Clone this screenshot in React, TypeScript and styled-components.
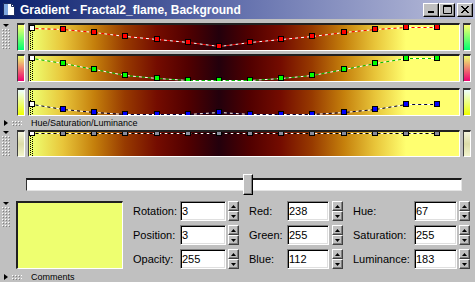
import React from 'react';
import styled, { createGlobalStyle } from 'styled-components';

const GlobalStyle = createGlobalStyle`
  html, body { margin: 0; padding: 0; background: #c0c0c0; }
  #root { width: 475px; height: 282px; }
`;

const CONTENT_W = 430;
const N = 14;
const STEP = 31.15;
const xs = Array.from({ length: N }, (_, i) => 3 + Math.round(STEP * i));
const R = [238, 232, 197, 151, 116, 81, 35, 81, 116, 151, 197, 232, 255, 255];
const G = [255, 197, 128, 58, 12, 0, 0, 0, 12, 58, 128, 197, 255, 255];
const B = [112, 58, 12, 0, 0, 0, 12, 0, 0, 0, 12, 58, 112, 112];
const A = Array.from({ length: N }, () => 255);

const gradientCss = `linear-gradient(90deg, ${xs
  .map((x, i) => `rgb(${R[i]},${G[i]},${B[i]}) ${((x / CONTENT_W) * 100).toFixed(2)}%`)
  .join(', ')})`;

const dots = `
  background:
    conic-gradient(from 270deg at 1px 1px, #ffffff 25%, transparent 0) 0 0 / 3px 3px,
    conic-gradient(from 270deg at 1px 1px, #808080 25%, transparent 0) 1px 1px / 3px 3px;
`;

const Window = styled.div`
  width: 475px;
  height: 282px;
  overflow: hidden;
  background: #c0c0c0;
  font-family: "Liberation Sans", Arial, sans-serif;
  font-size: 11px;
  color: #000;
  display: flex;
  flex-direction: column;
`;

const TitleBar = styled.div`
  height: 19px;
  flex: none;
  display: flex;
  align-items: center;
  box-sizing: border-box;
  padding: 0 2px 0 3px;
  background: linear-gradient(90deg, #0a1f6a 0%, #5a68a8 45%, #bcc0dc 100%);
`;

const TitleText = styled.span`
  margin-left: 5px;
  color: #fff;
  font-weight: bold;
  font-size: 12px;
  white-space: nowrap;
`;

const CaptionButtons = styled.div`
  margin-left: auto;
  display: flex;
`;

const CaptionButton = styled.div<{ $gap?: number }>`
  width: 16px;
  height: 14px;
  box-sizing: border-box;
  background: #c0c0c0;
  border: 1px solid;
  border-color: #fff #000 #000 #fff;
  box-shadow: inset -1px -1px #808080;
  display: flex;
  align-items: center;
  justify-content: center;
  margin-left: ${(p) => p.$gap ?? 0}px;
`;

const Panel = styled.div<{ $mt: number }>`
  display: flex;
  flex: none;
  margin-top: ${(p) => p.$mt}px;
`;

const Gutter = styled.div<{ $w: number }>`
  width: ${(p) => p.$w}px;
  flex: none;
  display: flex;
  flex-direction: column;
  box-sizing: border-box;
  padding-left: 2px;
`;

const TriDown = styled.div`
  width: 0;
  height: 0;
  border-left: 3px solid transparent;
  border-right: 3px solid transparent;
  border-top: 3px solid #000;
  margin: 1px 0 0 1px;
`;

const Grip = styled.div<{ $h: number }>`
  width: 8px;
  height: ${(p) => p.$h}px;
  margin-top: 2px;
  ${dots}
`;

const PanelBody = styled.div`
  display: flex;
  flex-direction: column;
`;

const ChannelRow = styled.div<{ $h: number; $mt: number }>`
  display: flex;
  gap: 3px;
  height: ${(p) => p.$h}px;
  margin-top: ${(p) => p.$mt}px;
`;

const MiniBar = styled.div<{ $bg: string }>`
  width: 8px;
  height: 100%;
  box-sizing: border-box;
  border-style: solid;
  border-width: 2px 1px 1px 1px;
  border-color: #303030 #fff #fff #404040;
  background: ${(p) => p.$bg};
`;

const Strip = styled.div`
  width: 432px;
  height: 100%;
  box-sizing: border-box;
  border-style: solid;
  border-width: 2px 1px 1px 1px;
  border-color: #202020 #fff #fff #404040;
  background: ${gradientCss};
  overflow: hidden;
`;

const ChartSvg = styled.svg`
  display: block;
`;

const FoldHeader = styled.div<{ $h: number; $mt?: number }>`
  display: flex;
  align-items: center;
  flex: none;
  height: ${(p) => p.$h}px;
  margin-top: ${(p) => p.$mt ?? 0}px;
`;

const TriRight = styled.div`
  width: 0;
  height: 0;
  border-top: 3px solid transparent;
  border-bottom: 3px solid transparent;
  border-left: 4px solid #000;
  margin-left: 4px;
`;

const HGrip = styled.div`
  width: 10px;
  height: 5px;
  margin-left: 4px;
  ${dots}
`;

const FoldLabel = styled.span`
  margin-left: 9px;
  font-size: 9px;
  white-space: nowrap;
`;

const SliderTrack = styled.div`
  position: relative;
  flex: none;
  margin: 21px 0 0 26px;
  width: 436px;
  height: 13px;
  box-sizing: border-box;
  background: #fff;
  border-style: solid;
  border-width: 2px 1px 1px 1px;
  border-color: #1a1a1a #e4e4e4 #e4e4e4 #303030;
`;

const SliderThumb = styled.div`
  position: absolute;
  top: -6px;
  width: 10px;
  height: 21px;
  box-sizing: border-box;
  background: #c0c0c0;
  border: 1px solid;
  border-color: #fff #000 #000 #fff;
  box-shadow: inset -1px -1px #808080;
`;

const Swatch = styled.div<{ $color: string }>`
  width: 107px;
  height: 68px;
  flex: none;
  box-sizing: border-box;
  border-style: solid;
  border-width: 2px 1px 1px 2px;
  border-color: #202020 #fff #fff #202020;
  background: ${(p) => p.$color};
`;

const FieldGrid = styled.div`
  margin-left: 10px;
  display: grid;
  grid-template-columns: 116px 104px 117px;
  row-gap: 4px;
  align-content: start;
`;

const Field = styled.div`
  display: flex;
  align-items: center;
  height: 20px;
`;

const FieldLabel = styled.span<{ $w: number }>`
  width: ${(p) => p.$w}px;
  flex: none;
  white-space: nowrap;
`;

const NumInput = styled.input<{ $w: number }>`
  width: ${(p) => p.$w}px;
  height: 20px;
  box-sizing: border-box;
  margin: 0;
  padding: 0 0 0 1px;
  background: #fff;
  border: 1px solid;
  border-color: #808080 #fff #fff #808080;
  box-shadow: inset 1px 1px #000, inset -1px -1px #dfdfdf;
  font-family: "Liberation Sans", Arial, sans-serif;
  font-size: 11px;
  color: #000;
  outline: none;
`;

const Spinner = styled.div<{ $ml: number }>`
  display: flex;
  flex-direction: column;
  width: 11px;
  height: 20px;
  margin-left: ${(p) => p.$ml}px;
`;

const SpinBtn = styled.div`
  flex: 1;
  box-sizing: border-box;
  background: #c0c0c0;
  border: 1px solid;
  border-color: #fff #404040 #404040 #fff;
  box-shadow: inset -1px -1px #808080;
  display: flex;
  align-items: center;
  justify-content: center;
`;

type ChannelProps = {
  values: number[];
  color: string;
  dash: string;
  h: number;
  top?: boolean;
};

const ChannelChart = ({ values, color, dash, h, top }: ChannelProps) => {
  const ys = values.map((v) => (top ? 1 : Math.round(2 + (1 - v / 255) * 21.5)));
  const pts = xs.map((x, i) => `${x + 0.5},${ys[i] + 0.5}`).join(' ');
  return (
    <ChartSvg width={CONTENT_W} height={h}>
      <line x1={1.5} x2={1.5} y1={0} y2={h} stroke="#000" strokeDasharray="1 1" />
      <line x1={3.5} x2={3.5} y1={1} y2={h} stroke="#000" strokeDasharray="1 1" />
      <polyline points={pts} fill="none" stroke="#fff" strokeDasharray="3 3" />
      <polyline points={pts} fill="none" stroke={dash} strokeDasharray="3 3" strokeDashoffset={3} />
      {xs.map((x, i) => (
        <rect
          key={i}
          x={x - 2.5}
          y={ys[i] - 2.5}
          width={5}
          height={5}
          fill={i === 0 ? '#fff' : color}
          stroke="#000"
        />
      ))}
    </ChartSvg>
  );
};

const Up = () => (
  <svg width="5" height="3" viewBox="0 0 5 3">
    <path d="M2.5 0L5 3H0Z" fill="#000" />
  </svg>
);
const Down = () => (
  <svg width="5" height="3" viewBox="0 0 5 3">
    <path d="M0 0H5L2.5 3Z" fill="#000" />
  </svg>
);

type FieldDef = { label: string; lw: number; value: string; iw: number; sm: number };

const columns: FieldDef[][] = [
  [
    { label: 'Rotation:', lw: 47, value: '3', iw: 46, sm: 2 },
    { label: 'Red:', lw: 38, value: '238', iw: 42, sm: 3 },
    { label: 'Hue:', lw: 61, value: '67', iw: 43, sm: 2 },
  ],
  [
    { label: 'Position:', lw: 47, value: '3', iw: 46, sm: 2 },
    { label: 'Green:', lw: 38, value: '255', iw: 42, sm: 3 },
    { label: 'Saturation:', lw: 61, value: '255', iw: 43, sm: 2 },
  ],
  [
    { label: 'Opacity:', lw: 47, value: '255', iw: 46, sm: 2 },
    { label: 'Blue:', lw: 38, value: '112', iw: 42, sm: 3 },
    { label: 'Luminance:', lw: 61, value: '183', iw: 43, sm: 2 },
  ],
];

const channels = [
  { values: R, color: '#ff0000', dash: '#ff0000', h: 28, mt: 0, bar: 'linear-gradient(#ffff70, #00ff70)' },
  { values: G, color: '#00ff00', dash: '#00c000', h: 28, mt: 3, bar: 'linear-gradient(#eeff70, #ee0070)' },
  { values: B, color: '#0000ff', dash: '#000040', h: 28, mt: 6, bar: 'linear-gradient(#eeffff, #eeff00)' },
];

const alphaBar = 'linear-gradient(#f4f4dc, #dcdca8 50%, #f2f4cc)';
const sliderPos = 0.5;

export default function App() {
  return (
    <>
      <GlobalStyle />
      <Window>
        <TitleBar>
          <svg width="12" height="13" viewBox="0 0 12 13">
            <path d="M0.5 0.5H8.5L11.5 3.5V12.5H0.5Z" fill="#fff" stroke="#1c2c60" />
            <rect x="1" y="1" width="4" height="11" fill="#7fa8e0" />
            <path d="M8.5 0.5V3.5H11.5" fill="none" stroke="#1c2c60" />
          </svg>
          <TitleText>Gradient - Fractal2_flame, Background</TitleText>
          <CaptionButtons>
            <CaptionButton>
              <svg width="8" height="7" viewBox="0 0 8 7">
                <rect x="1" y="5" width="6" height="2" fill="#000" />
              </svg>
            </CaptionButton>
            <CaptionButton>
              <svg width="9" height="9" viewBox="0 0 9 9">
                <path d="M0.5 0.5H8.5V8.5H0.5Z M0.5 1.5H8.5" fill="none" stroke="#000" />
              </svg>
            </CaptionButton>
            <CaptionButton $gap={2}>
              <svg width="8" height="7" viewBox="0 0 8 7">
                <path d="M0 0L7 7M1 0L8 7M7 0L0 7M8 0L1 7" stroke="#000" strokeWidth="1" />
              </svg>
            </CaptionButton>
          </CaptionButtons>
        </TitleBar>

        <Panel $mt={4}>
          <Gutter $w={17}>
            <TriDown />
            <Grip $h={21} />
          </Gutter>
          <PanelBody>
            {channels.map((c, i) => (
              <ChannelRow key={i} $h={c.h} $mt={c.mt}>
                <MiniBar $bg={c.bar} />
                <Strip>
                  <ChannelChart values={c.values} color={c.color} dash={c.dash} h={c.h - 3} />
                </Strip>
                <MiniBar $bg={c.bar} />
              </ChannelRow>
            ))}
          </PanelBody>
        </Panel>

        <FoldHeader $h={14}>
          <TriRight />
          <HGrip />
          <FoldLabel>Hue/Saturation/Luminance</FoldLabel>
        </FoldHeader>

        <Panel $mt={0}>
          <Gutter $w={17}>
            <TriDown />
            <Grip $h={21} />
          </Gutter>
          <PanelBody>
            <ChannelRow $h={27} $mt={0}>
              <MiniBar $bg={alphaBar} />
              <Strip>
                <ChannelChart values={A} color="#8a8c9c" dash="#000" h={24} top />
              </Strip>
              <MiniBar $bg={alphaBar} />
            </ChannelRow>
          </PanelBody>
        </Panel>

        <SliderTrack>
          <SliderThumb style={{ left: `${Math.round(sliderPos * 432)}px` }} />
        </SliderTrack>

        <Panel $mt={10}>
          <Gutter $w={16}>
            <TriDown />
            <Grip $h={21} />
          </Gutter>
          <Swatch $color="#eeff70" />
          <FieldGrid>
            {columns.flat().map((f) => (
              <Field key={f.label}>
                <FieldLabel $w={f.lw}>{f.label}</FieldLabel>
                <NumInput $w={f.iw} readOnly value={f.value} />
                <Spinner $ml={f.sm}>
                  <SpinBtn>
                    <Up />
                  </SpinBtn>
                  <SpinBtn>
                    <Down />
                  </SpinBtn>
                </Spinner>
              </Field>
            ))}
          </FieldGrid>
        </Panel>

        <FoldHeader $h={12} $mt={2}>
          <TriRight />
          <HGrip />
          <FoldLabel>Comments</FoldLabel>
        </FoldHeader>
      </Window>
    </>
  );
}
